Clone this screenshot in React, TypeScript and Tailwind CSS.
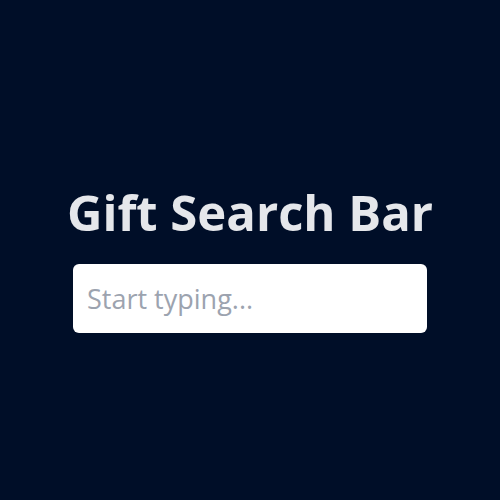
export default function App() {
  return (
    <div
      className="h-screen w-full bg-[#000e28] flex flex-col items-center justify-center pt-5"
      style={{ fontFamily: '"Open Sans", "Noto Sans", sans-serif' }}
    >
      <h1 className="text-[49px] leading-[48px] font-bold text-[#e5e7eb] mb-7">
        Gift Search Bar
      </h1>
      <input
        type="text"
        placeholder="Start typing..."
        className="w-[354px] h-[69px] rounded-md bg-white px-[14px] text-[27px] text-gray-800 placeholder:text-[#9ca3af] outline-none"
      />
    </div>
  );
}
